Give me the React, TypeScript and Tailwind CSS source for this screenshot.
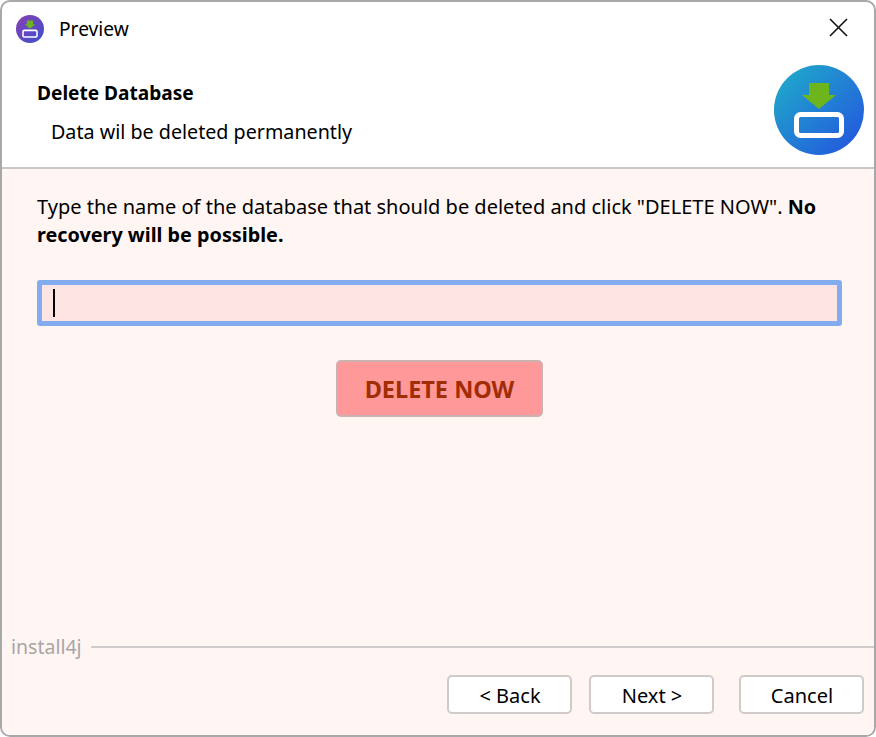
const font = { fontFamily: '"Noto Sans", "Open Sans", sans-serif' }

function AppLogo({ size }: { size: number }) {
  const gid = `grad-${size}`
  const purple = size < 50
  return (
    <svg width={size} height={size} viewBox="0 0 90 90" className="shrink-0">
      <defs>
        <linearGradient id={gid} x1="0" y1="0" x2="1" y2="1">
          <stop offset="0" stopColor={purple ? '#8a3fb0' : '#1fb0c8'} />
          <stop offset="1" stopColor={purple ? '#3a50d0' : '#2450e0'} />
        </linearGradient>
      </defs>
      <circle cx="45" cy="45" r="45" fill={`url(#${gid})`} />
      <path d="M35 18H55V30H62L45 44L28 30H35Z" fill="#6cb51c" />
      <rect x="22.5" y="49.5" width="45" height="21" rx="4" fill="none" stroke="#fff" strokeWidth="5" />
    </svg>
  )
}

function WizardButton({ label }: { label: string }) {
  return (
    <button className="w-[125px] h-[39px] pt-[2px] pl-[1px] bg-white border-2 border-[#cfcbca] rounded-[5px] text-[20px] text-black leading-none">
      {label}
    </button>
  )
}

export default function App() {
  return (
    <div style={font} className="w-[876px] h-[737px] bg-white border-2 border-[#a8a8a8] rounded-[10px] overflow-hidden flex flex-col text-black">
      {/* title bar */}
      <div className="h-[54px] shrink-0 flex items-center pl-[14px] pr-[26px]">
        <AppLogo size={28} />
        <span className="ml-[15px] text-[19.2px]">Preview</span>
        <svg width="19" height="19" viewBox="0 0 19 19" className="ml-auto -mt-[3px]" fill="none" stroke="#111" strokeWidth="1.6">
          <path d="M1 1L18 18M18 1L1 18" />
        </svg>
      </div>

      {/* header */}
      <div className="h-[111px] shrink-0 flex justify-between items-start pl-[35px] pr-[10px] border-b-2 border-[#c8c6c5] box-content">
        <div>
          <div className="text-[19.1px] font-bold leading-[27px] mt-[24px]">Delete Database</div>
          <div className="text-[19.7px] leading-[27px] mt-[11px] ml-[14px]">Data wil be deleted permanently</div>
        </div>
        <div className="mt-[9px]">
          <AppLogo size={90} />
        </div>
      </div>

      {/* body */}
      <div className="flex-1 flex flex-col bg-[#fff5f3]">
        <div className="flex-1 pl-[35px] pr-[32px] pt-[24px]">
          <p className="text-[20px] leading-[28px]">
            Type the name of the database that should be deleted and click "DELETE NOW". <b className="text-[19.8px]">No recovery will be possible.</b>
          </p>
          <div className="mt-[31px] h-[46px] border-[5px] border-[#82aced] rounded-[3px] bg-[#fee4e3] flex items-center pl-[11px]">
            <span className="w-[1.5px] h-[28px] bg-black" />
          </div>
          <div className="flex justify-center mt-[34px]">
            <button className="w-[207px] h-[57px] pt-[2px] bg-[#ff9899] border-2 border-[#ccb1b1] rounded-[5px] text-[23.5px] font-bold text-[#a12d05] leading-none">
              DELETE NOW
            </button>
          </div>
        </div>

        {/* footer */}
        <div className="h-[102px] shrink-0">
          <div className="flex items-center h-[28px] pl-[9px]">
            <span className="text-[19.5px] text-[#a9a5a5] leading-none">install4j</span>
            <span className="flex-1 h-[2px] bg-[#cfcbca] ml-[9px]" />
          </div>
          <div className="flex justify-end pr-[10px] mt-[14px]">
            <WizardButton label="< Back" />
            <div className="ml-[17px]"><WizardButton label="Next >" /></div>
            <div className="ml-[25px]"><WizardButton label="Cancel" /></div>
          </div>
        </div>
      </div>
    </div>
  )
}
